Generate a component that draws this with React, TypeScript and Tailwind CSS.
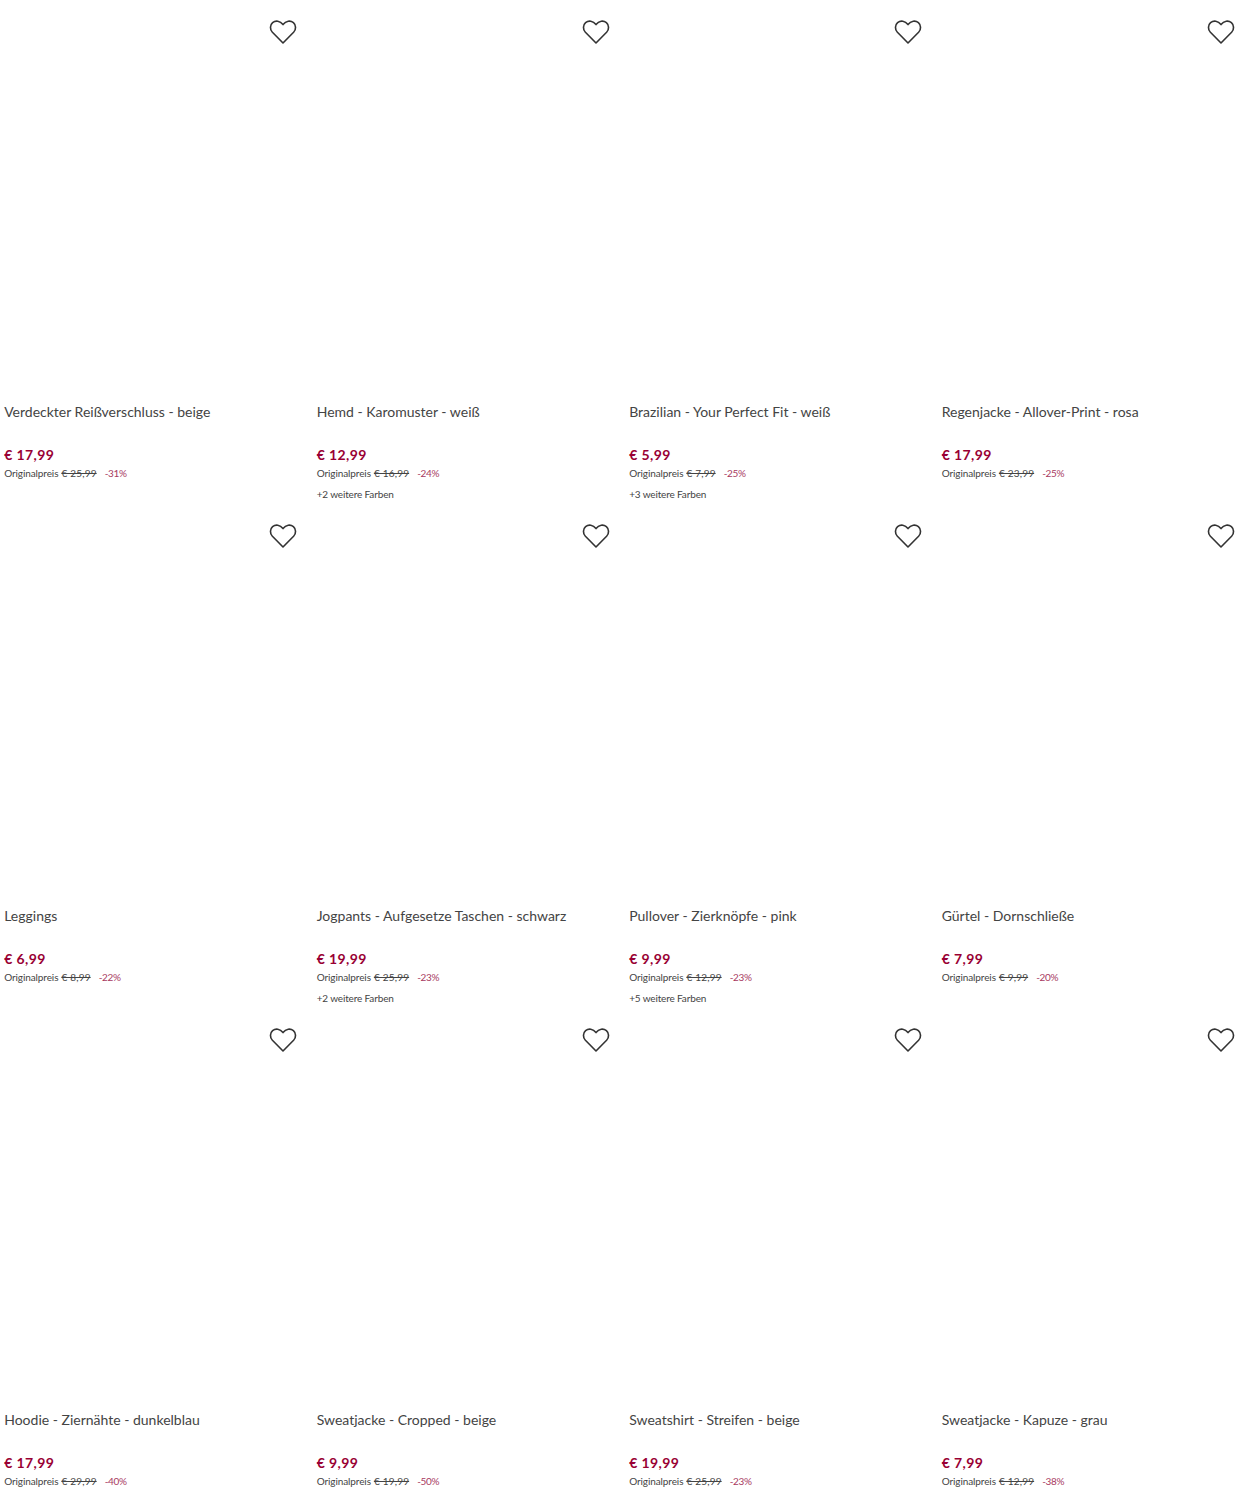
const PRODUCTS = [
  { title: 'Verdeckter Reißverschluss - beige', price: '€ 17,99', original: '€ 25,99', off: '-31%' },
  { title: 'Hemd - Karomuster - weiß', price: '€ 12,99', original: '€ 16,99', off: '-24%', colors: '+2 weitere Farben' },
  { title: 'Brazilian - Your Perfect Fit - weiß', price: '€ 5,99', original: '€ 7,99', off: '-25%', colors: '+3 weitere Farben' },
  { title: 'Regenjacke - Allover-Print - rosa', price: '€ 17,99', original: '€ 23,99', off: '-25%' },
  { title: 'Leggings', price: '€ 6,99', original: '€ 8,99', off: '-22%' },
  { title: 'Jogpants - Aufgesetze Taschen - schwarz', price: '€ 19,99', original: '€ 25,99', off: '-23%', colors: '+2 weitere Farben' },
  { title: 'Pullover - Zierknöpfe - pink', price: '€ 9,99', original: '€ 12,99', off: '-23%', colors: '+5 weitere Farben' },
  { title: 'Gürtel - Dornschließe', price: '€ 7,99', original: '€ 9,99', off: '-20%' },
  { title: 'Hoodie - Ziernähte - dunkelblau', price: '€ 17,99', original: '€ 29,99', off: '-40%' },
  { title: 'Sweatjacke - Cropped - beige', price: '€ 9,99', original: '€ 19,99', off: '-50%' },
  { title: 'Sweatshirt - Streifen - beige', price: '€ 19,99', original: '€ 25,99', off: '-23%' },
  { title: 'Sweatjacke - Kapuze - grau', price: '€ 7,99', original: '€ 12,99', off: '-38%' },
];

function Heart() {
  return (
    <svg width="28" height="26" viewBox="0 0 28 26" fill="none" stroke="#333" strokeWidth="1.6" strokeLinejoin="round">
      <path d="M14 24 L3.4 13.2 C0.6 10.2 1 6 3.6 3.7 C6.6 1.2 11 1.7 14 5.6 C17 1.7 21.4 1.2 24.4 3.7 C27 6 27.4 10.2 24.6 13.2 Z" />
    </svg>
  );
}

export default function App() {
  return (
    <div className="w-[1250px] h-[1512px] overflow-hidden bg-white font-['Lato','Liberation_Sans',sans-serif] text-[#333]">
      <div className="grid grid-cols-4 auto-rows-[504px]">
        {PRODUCTS.map((p) => (
          <article key={p.title} className="pl-[4.2px]">
            <div className="h-[402px] flex justify-end pt-[19px] pr-[15.2px]">
              <Heart />
            </div>
            <h3 className="text-[14px] leading-[20px] h-[43px] font-normal text-[#444]">{p.title}</h3>
            <div className="text-[14px] leading-[20px] font-bold tracking-[0.4px] text-[#990033]">{p.price}</div>
            <div className="flex items-center text-[10px] leading-[16px] h-[16px] text-[#444] tracking-[-0.1px]">
              <span>Originalpreis</span>
              <span className="ml-[3px] line-through tracking-[0.2px]">{p.original}</span>
              <span className="ml-[8px] text-[#a83a5f] tracking-[-0.3px]">{p.off}</span>
            </div>
            {p.colors && <div className="text-[10px] leading-[16px] mt-[5px] text-[#444] tracking-[-0.15px]">{p.colors}</div>}
          </article>
        ))}
      </div>
    </div>
  );
}
